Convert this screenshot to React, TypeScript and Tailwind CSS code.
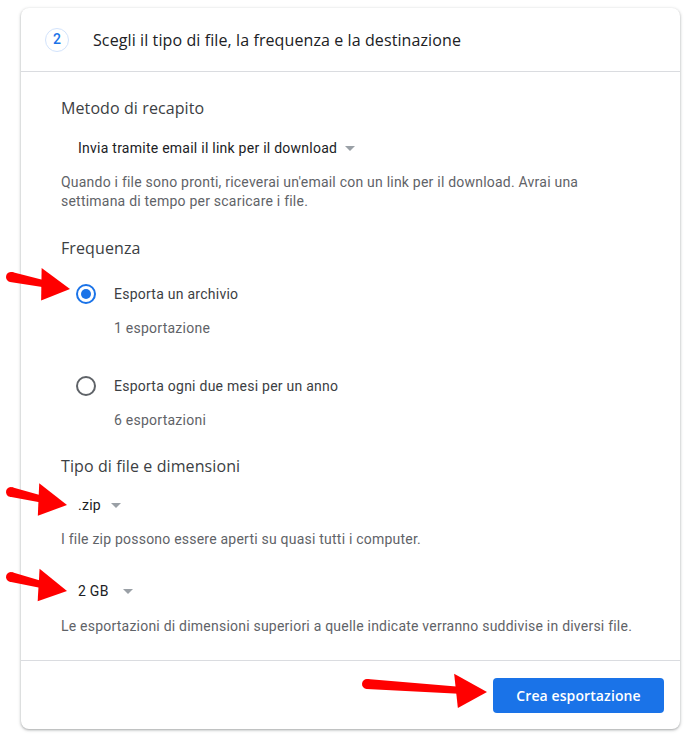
import React from "react";

function Arrow({ x1, y1, x2, y2, head = 28, half = 15, w = 9 }: { x1: number; y1: number; x2: number; y2: number; head?: number; half?: number; w?: number }) {
  const dx = x2 - x1;
  const dy = y2 - y1;
  const len = Math.sqrt(dx * dx + dy * dy);
  const ang = (Math.atan2(dy, dx) * 180) / Math.PI;
  return (
    <g transform={`translate(${x1} ${y1}) rotate(${ang})`}>
      <path d={`M0 ${-w / 2 - 0.5} L${len - head + 2} ${-w / 2 + 1} L${len - head + 2} ${w / 2 - 1} L0 ${w / 2 + 0.5} Z`} fill="#f00" />
      <circle cx={0} cy={0} r={w / 2 + 0.5} fill="#f00" />
      <path d={`M${len - head - 4} ${-half} L${len} 0 L${len - head + 2} ${half + 2} Z`} fill="#f00" />
    </g>
  );
}

function Tri() {
  return (
    <svg width="10" height="5" viewBox="0 0 10 5" className="inline-block">
      <path d="M0 0 L10 0 L5 5 Z" fill="#9aa0a6" />
    </svg>
  );
}

function Radio({ checked }: { checked: boolean }) {
  return (
    <div className={`w-[20px] h-[20px] rounded-full border-2 flex items-center justify-center ${checked ? "border-[#1a73e8]" : "border-[#5f6368]"}`}>
      {checked && <div className="w-[10px] h-[10px] rounded-full bg-[#1a73e8]" />}
    </div>
  );
}

const heading = "text-[16px] leading-[24px] text-[#3c4043] font-['Open_Sans',sans-serif] tracking-[0.1px]";
const desc = "text-[14px] leading-[19px] text-[#5f6368] tracking-[0.22px]";

export default function App() {
  return (
    <div className="relative w-[699px] h-[735px] bg-white font-['Roboto',sans-serif]">
      <div className="ml-[21px] pt-[8px] w-[659px]">
        <div className="rounded-[8px] bg-white shadow-[0_1px_2px_0_rgba(60,64,67,0.3),0_1px_3px_1px_rgba(60,64,67,0.15)]">
          <div className="h-[64px] flex items-center pl-[24px] border-b border-[#dadce0]">
            <div className="w-[24px] h-[24px] rounded-full border border-[#d2e3fc] flex items-center justify-center text-[14px] text-[#1a73e8] font-medium">2</div>
            <div className="ml-[24px] text-[16px] text-[#202124] font-['Open_Sans',sans-serif] tracking-[0.1px]">Scegli il tipo di file, la frequenza e la destinazione</div>
          </div>
          <div className="pl-[40px] pr-[24px] pt-[24px] pb-[24px]">
            <div className={heading}>Metodo di recapito</div>
            <div className="mt-[18px] ml-[17px] flex items-center text-[14px] leading-[20px] text-[#202124] tracking-[0.25px]">
              <span>Invia tramite email il link per il download</span>
              <span className="ml-[8px] flex"><Tri /></span>
            </div>
            <div className={`mt-[15px] ${desc}`}>
              Quando i file sono pronti, riceverai un'email con un link per il download. Avrai una<br />settimana di tempo per scaricare i file.
            </div>
            <div className={`mt-[25px] ${heading}`}>Frequenza</div>
            <div className="mt-[24px] ml-[15px] flex items-center">
              <Radio checked />
              <span className="ml-[18px] text-[14px] leading-[20px] text-[#3c4043] tracking-[0.25px]">Esporta un archivio</span>
            </div>
            <div className="mt-[14px] ml-[53px] text-[14px] leading-[20px] text-[#5f6368] tracking-[0.25px]">1 esportazione</div>
            <div className="mt-[38px] ml-[15px] flex items-center">
              <Radio checked={false} />
              <span className="ml-[18px] text-[14px] leading-[20px] text-[#3c4043] tracking-[0.25px]">Esporta ogni due mesi per un anno</span>
            </div>
            <div className="mt-[14px] ml-[53px] text-[14px] leading-[20px] text-[#5f6368] tracking-[0.25px]">6 esportazioni</div>
            <div className={`mt-[24px] ${heading}`}>Tipo di file e dimensioni</div>
            <div className="mt-[17px] ml-[17px] flex items-center text-[14px] leading-[20px] text-[#202124] tracking-[0.25px]">
              <span>.zip</span>
              <span className="ml-[10px] flex"><Tri /></span>
            </div>
            <div className={`mt-[14px] ${desc} leading-[20px]`}>I file zip possono essere aperti su quasi tutti i computer.</div>
            <div className="mt-[32px] ml-[17px] flex items-center text-[14px] leading-[20px] text-[#202124] tracking-[0.25px]">
              <span>2 GB</span>
              <span className="ml-[14px] flex"><Tri /></span>
            </div>
            <div className={`mt-[15px] ${desc} leading-[20px]`}>Le esportazioni di dimensioni superiori a quelle indicate verranno suddivise in diversi file.</div>
          </div>
          <div className="border-t border-[#dadce0] flex justify-end pt-[17px] pb-[16px] pr-[16px]">
            <button className="w-[171px] h-[35px] rounded-[4px] bg-[#1a73e8] text-white text-[14px] font-semibold font-['Open_Sans',sans-serif] tracking-[0.1px]">Crea esportazione</button>
          </div>
        </div>
      </div>
      <svg className="absolute left-0 top-0 pointer-events-none" width="699" height="735">
        <Arrow x1={11} y1={277} x2={70} y2={289} />
        <Arrow x1={11} y1={492} x2={67} y2={505} />
        <Arrow x1={11} y1={577} x2={67} y2={591} />
        <Arrow x1={367} y1={684} x2={487} y2={692} head={30} half={16} />
      </svg>
    </div>
  );
}
